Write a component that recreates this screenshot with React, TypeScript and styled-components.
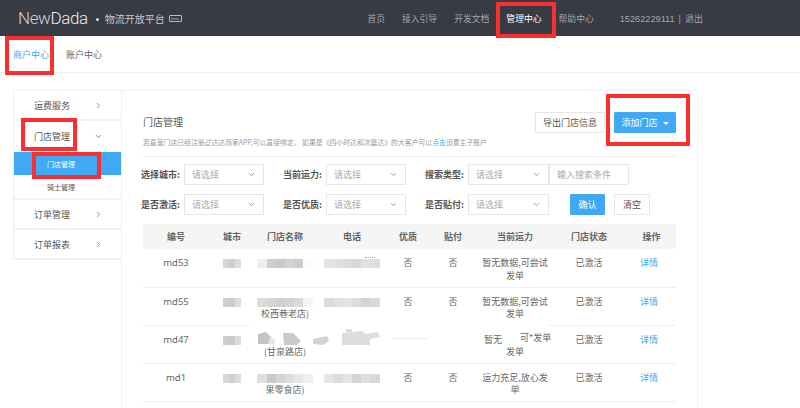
import React from 'react';
import styled, { createGlobalStyle } from 'styled-components';
import { ChevronDown, ChevronRight } from 'lucide-react';

const FONT = '"Noto Sans CJK SC", "Noto Sans", sans-serif';
const BLUE = '#3fa9f5';

const Global = createGlobalStyle`
html, body { margin: 0; padding: 0; background: #fff; }
body { font-family: ${FONT}; color: #666; font-size: 9px; }
* { box-sizing: border-box; }
`;

interface Row {
  id: string;
  city: string[];
  name: string[];
  nameNote: string;
  phone: string[];
  phoneSpeck?: boolean;
  quality: string;
  paid: string;
  capacity: string;
  garbled?: boolean;
}

const rows: Row[] = [
  {
    id: 'md53',
    city: ['#d6d6d6', '#cfcfcf', '#dedede'],
    name: ['#eeeeee', '#cdcdcd', '#c9c9c9', '#d2d2d2', '#cccccc', '#fbfbfb'],
    nameNote: '',
    phone: ['#e4e4e4', '#e0e0e0', '#dcdcdc', '#d8d8d8', '#e2e2e2', '#dedede'],
    phoneSpeck: true,
    quality: '否',
    paid: '否',
    capacity: '暂无数据,可尝试发单',
  },
  {
    id: 'md55',
    city: ['#cfcfcf', '#cccccc', '#dddddd'],
    name: ['#dcdcdc', '#d6d6d6', '#d0d0d0', '#d4d4d4', '#dadada', '#f2f7f6'],
    nameNote: '校西巷老店)',
    phone: ['#dfdbdb', '#e2e0e0', '#e4e2e2', '#dedcdc', '#d4d4d4', '#dadada'],
    quality: '否',
    paid: '否',
    capacity: '暂无数据,可尝试发单',
  },
  {
    id: 'md47',
    city: ['#cdcdcd', '#cbcbcb', '#dadada'],
    name: [],
    nameNote: '(甘泉路店)',
    phone: [],
    quality: '',
    paid: '',
    capacity: '',
    garbled: true,
  },
  {
    id: 'md1',
    city: ['#d8d8d8', '#d0d0d0', '#dcdcdc'],
    name: ['#dedede', '#c9c9c9', '#d4d4d4', '#dddddd', '#e8e8e8', '#efefef'],
    nameNote: '果零食店)',
    phone: ['#e6e6e6', '#dcdcdc', '#e4e4e4', '#d4d4d4', '#dedede', '#d8d8d8'],
    quality: '否',
    paid: '否',
    capacity: '运力充足,放心发单',
  },
];

const columns = [
  { title: '编号', width: 66 },
  { title: '城市', width: 46 },
  { title: '门店名称', width: 60 },
  { title: '电话', width: 74 },
  { title: '优质', width: 38 },
  { title: '贴付', width: 52 },
  { title: '当前运力', width: 72 },
  { title: '门店状态', width: 76 },
  { title: '操作', width: 49 },
];

const marks = [
  { x: 496, y: 2, w: 60, h: 36 },
  { x: 5, y: 36, w: 49, h: 39 },
  { x: 21, y: 118, w: 56, h: 33 },
  { x: 32, y: 152, w: 69, h: 27 },
  { x: 606, y: 94, w: 84, h: 52 },
];

const Filter = ({ label, width }: { label: string; width?: number }) => (
  <Field>
    <FieldLabel>{label}</FieldLabel>
    <Select $w={width || 80}>
      请选择
      <ChevronDown size={9} strokeWidth={2} color="#777" />
    </Select>
  </Field>
);

const Mosaic = ({ cells, cellWidth, speck }: { cells: string[]; cellWidth: number; speck?: boolean }) => (
  <Pixels>
    {cells.map((c, i) => (
      <Pixel key={i} $c={c} $w={cellWidth} />
    ))}
    {speck && <Speck />}
  </Pixels>
);

export default function App() {
  return (
    <Page>
      <Global />
      <Header>
        <Logo>
          New<strong>Dada</strong>
        </Logo>
        <Dot />
        <Platform>物流开放平台</Platform>
        <Beta>beta</Beta>
        <Nav>
          <NavLink>首页</NavLink>
          <NavLink>接入引导</NavLink>
          <NavLink>开发文档</NavLink>
          <NavLink $active>管理中心</NavLink>
          <NavLink>帮助中心</NavLink>
        </Nav>
        <User>
          15262229111<UserSep>|</UserSep>
          <Logout>退出</Logout>
        </User>
      </Header>

      <SubNav>
        <SubLink $active>商户中心</SubLink>
        <SubLink>账户中心</SubLink>
      </SubNav>

      <Body>
        <Side>
          <SideItem>
            运费服务
            <ChevronRight size={9} strokeWidth={2} color="#666" />
          </SideItem>
          <SideGroup>
            <SideItem as="div" $plain>
              门店管理
              <ChevronDown size={9} strokeWidth={2} color="#666" />
            </SideItem>
            <SubItem $active>门店管理</SubItem>
            <SubItem>骑士管理</SubItem>
          </SideGroup>
          <SideItem>
            订单管理
            <ChevronRight size={9} strokeWidth={2} color="#666" />
          </SideItem>
          <SideItem>
            订单报表
            <ChevronRight size={9} strokeWidth={2} color="#666" />
          </SideItem>
        </Side>

        <Panel>
          <PanelHead>
            <div>
              <Title>门店管理</Title>
              <Desc>
                若直营门店已经注册过达达商家APP,可以直接绑定。 如果是《四小时达和次晨达》的大客户可以<a>点击</a>设置主子账户
              </Desc>
            </div>
            <HeadActions>
              <Btn $w={70}>导出门店信息</Btn>
              <Btn $w={62} $primary>
                添加门店 <Caret />
              </Btn>
            </HeadActions>
          </PanelHead>

          <FilterRow>
            <Filter label="选择城市:" />
            <Filter label="当前运力:" />
            <Filter label="搜索类型:" width={81} />
            <SearchBox>输入搜索条件</SearchBox>
          </FilterRow>
          <FilterRow>
            <Filter label="是否激活:" />
            <Filter label="是否优质:" />
            <Filter label="是否贴付:" width={81} />
            <FilterBtns>
              <Btn $w={35} $primary>
                确认
              </Btn>
              <Btn $w={36}>清空</Btn>
            </FilterBtns>
          </FilterRow>

          <Table>
            <colgroup>
              {columns.map((c) => (
                <col key={c.title} width={c.width} />
              ))}
            </colgroup>
            <thead>
              <tr>
                {columns.map((c) => (
                  <Th key={c.title}>{c.title}</Th>
                ))}
              </tr>
            </thead>
            <tbody>
              {rows.map((r) => (
                <tr key={r.id}>
                  <IdCell>{r.id}</IdCell>
                  <Td>
                    <Mosaic cells={r.city} cellWidth={6} />
                  </Td>
                  <Td>
                    {r.name.length > 0 ? <Mosaic cells={r.name} cellWidth={9.2} /> : <Blank />}
                    {r.nameNote}
                  </Td>
                  <Td>
                    {r.phone.length > 0 ? <Mosaic cells={r.phone} cellWidth={9.2} speck={r.phoneSpeck} /> : <Blank />}
                  </Td>
                  <Td>{r.quality}</Td>
                  <Td>{r.paid}</Td>
                  {r.garbled ? (
                    <Td>
                      <Garbled>
                        暂无
                        <Stray>可*发单</Stray>
                      </Garbled>
                      发单
                    </Td>
                  ) : (
                    <Td>{r.capacity}</Td>
                  )}
                  <Td>已激活</Td>
                  <LinkCell>详情</LinkCell>
                </tr>
              ))}
            </tbody>
          </Table>
        </Panel>
      </Body>

      {/* 第三行被涂抹的部分 */}
      <Smudge viewBox="0 0 300 30" width="300" height="30">
        <rect x="0" y="0" width="299" height="8" fill="#fff" />
        <path d="M8 13l8-2 6 6-4 6H8z" fill="#c4c4c4" />
        <path d="M20 16l6 3-2 5-6-1z" fill="#e6e6e6" />
        <path d="M33 12l10 0 8 8-4 4H34z" fill="#c9cacb" />
        <path d="M63 18l14-3 2 5-6 4-10-1z" fill="#d2d2d2" />
        <path d="M92 12l20-2 4 3 12-2 2 5-10 2v6H92z" fill="#dddddd" />
        <path d="M96 8h6v3h-6z" fill="#e8d8d8" />
        <rect x="142" y="17" width="36" height="1" fill="#ececec" />
      </Smudge>

      {marks.map((m) => (
        <Mark key={`${m.x}-${m.y}`} $x={m.x} $y={m.y} $w={m.w} $h={m.h} />
      ))}
    </Page>
  );
}

const Page = styled.div`
  position: relative;
  width: 800px;
  height: 408px;
  overflow: hidden;
`;
const Header = styled.header`
  height: 36px;
  background: #383a44;
  display: flex;
  align-items: center;
  padding: 0 97px 0 18px;
  color: #b9bac0;
`;
const Logo = styled.div`
  font-family: Roboto, sans-serif;
  font-weight: 300;
  font-size: 17px;
  letter-spacing: -0.4px;
  color: #d5d6da;
  strong {
    font-weight: 300;
    color: #eceded;
  }
`;
const Dot = styled.span`
  width: 3px;
  height: 3px;
  border-radius: 50%;
  background: #ddd;
  margin: 2px 6px 0 8px;
`;
const Platform = styled.span`
  font-size: 10px;
  color: #c8c9cd;
`;
const Beta = styled.span`
  margin-left: 4px;
  width: 13px;
  height: 7px;
  border: 1px solid #b9bac0;
  border-radius: 1px;
  font-family: 'Liberation Sans', sans-serif;
  font-size: 4px;
  line-height: 5px;
  text-align: center;
`;
const Nav = styled.nav`
  margin-left: auto;
  display: flex;
  gap: 17px;
`;
const NavLink = styled.a<{ $active?: boolean }>`
  font-size: 8.8px;
  color: ${(p) => (p.$active ? '#fff' : '#a5a6ac')};
`;
const User = styled.div`
  margin-left: 26px;
  font-family: 'Liberation Sans', sans-serif;
  font-size: 9.2px;
  color: #a5a6ac;
`;
const UserSep = styled.span`
  margin: 0 4px;
`;
const Logout = styled.span`
  font-family: ${FONT};
  font-size: 9px;
`;
const SubNav = styled.div`
  height: 37px;
  display: flex;
  align-items: center;
  gap: 17px;
  padding-left: 13px;
  border-bottom: 1px solid #eee;
`;
const SubLink = styled.a<{ $active?: boolean }>`
  font-size: 9px;
  color: ${(p) => (p.$active ? BLUE : '#666')};
`;
const Body = styled.div`
  display: flex;
  padding: 17px 0 0 13px;
  align-items: flex-start;
`;
const Side = styled.aside`
  width: 108px;
  border-top: 1px solid #f0f0f0;
  border-left: 1px solid #f0f0f0;
`;
const SideItem = styled.div<{ $plain?: boolean }>`
  height: ${(p) => (p.$plain ? '31px' : '30px')};
  display: flex;
  align-items: center;
  justify-content: space-between;
  padding: 0 18px 0 20px;
  font-size: 9px;
  color: #555;
  border-bottom: ${(p) => (p.$plain ? 'none' : '2px solid #f3f3f3')};
`;
const SideGroup = styled.div`
  border-bottom: 2px solid #f3f3f3;
`;
const SubItem = styled.div<{ $active?: boolean }>`
  height: 23px;
  display: flex;
  align-items: center;
  padding-left: 33px;
  font-size: 7px;
  color: ${(p) => (p.$active ? '#fff' : '#555')};
  background: ${(p) => (p.$active ? BLUE : 'transparent')};
`;
const Panel = styled.main`
  width: 577px;
  height: 330px;
  padding: 21px 21px 0 21px;
  border: 1px solid #f0f0f0;
  border-bottom: none;
`;
const PanelHead = styled.div`
  height: 45px;
  display: flex;
  justify-content: space-between;
  align-items: flex-start;
  border-bottom: 1px solid #eee;
`;
const Title = styled.div`
  font-size: 10px;
  line-height: 14px;
  margin-top: 3px;
  color: #555;
`;
const Desc = styled.div`
  font-size: 6.85px;
  line-height: 12px;
  margin-top: 7px;
  white-space: nowrap;
  color: #999;
  a {
    color: ${BLUE};
  }
`;
const HeadActions = styled.div`
  display: flex;
  gap: 9px;
`;
const Btn = styled.button<{ $w: number; $primary?: boolean }>`
  width: ${(p) => p.$w}px;
  height: 21px;
  padding: 0;
  font-family: ${FONT};
  font-size: 9px;
  border-radius: 1px;
  border: 1px solid ${(p) => (p.$primary ? BLUE : '#e6e6e6')};
  background: ${(p) => (p.$primary ? BLUE : '#fff')};
  color: ${(p) => (p.$primary ? '#fff' : '#555')};
`;
const Caret = styled.i`
  display: inline-block;
  margin-left: 3px;
  vertical-align: 1px;
  border: 3px solid transparent;
  border-top-color: #fff;
  border-bottom: none;
`;
const FilterRow = styled.div`
  display: flex;
  gap: 19px;
  margin: 7px 0 0 -2px;
  & + & {
    margin-top: 9px;
  }
`;
const Field = styled.div`
  display: flex;
  align-items: center;
`;
const FieldLabel = styled.label`
  width: 43px;
  font-size: 9px;
  font-weight: 700;
  color: #555;
  white-space: nowrap;
`;
const Select = styled.div<{ $w: number }>`
  width: ${(p) => p.$w}px;
  height: 21px;
  padding: 0 7px;
  display: flex;
  align-items: center;
  justify-content: space-between;
  border: 1px solid #e6e6e6;
  font-size: 9px;
  color: #aaa;
`;
const SearchBox = styled.div`
  width: 80px;
  height: 21px;
  margin-left: -19px;
  padding-left: 7px;
  display: flex;
  align-items: center;
  border: 1px solid #e6e6e6;
  font-size: 9px;
  color: #aaa;
`;
const FilterBtns = styled.div`
  display: flex;
  gap: 9px;
  margin-left: 2px;
`;
const Table = styled.table`
  width: 533px;
  margin-top: 9px;
  border-collapse: collapse;
  table-layout: fixed;
`;
const Th = styled.th`
  height: 25px;
  padding: 0;
  background: #f5f5f5;
  font-size: 9px;
  font-weight: 700;
  color: #666;
`;
const Td = styled.td`
  height: 38px;
  padding: 8px 2px 0;
  vertical-align: top;
  text-align: center;
  font-size: 9px;
  line-height: 12.5px;
  color: #666;
  border-bottom: 1px solid #eee;
`;
const IdCell = styled(Td)`
  font-family: 'Noto Sans', sans-serif;
  font-size: 9.5px;
`;
const LinkCell = styled(Td)`
  color: ${BLUE};
  padding-right: 7px;
`;
const Pixels = styled.div`
  position: relative;
  display: flex;
  height: 9px;
  margin: 2px 0 1.5px;
  justify-content: center;
`;
const Pixel = styled.span<{ $c: string; $w: number }>`
  width: ${(p) => p.$w}px;
  background: ${(p) => p.$c};
`;
const Speck = styled.span`
  position: absolute;
  right: 12px;
  top: -2px;
  width: 10px;
  height: 2px;
  border-top: 1px dotted #aaa;
`;
const Blank = styled.div`
  height: 12.5px;
`;
const Garbled = styled.div`
  display: flex;
  height: 12.5px;
  padding-left: 3px;
  white-space: nowrap;
`;
const Stray = styled.span`
  margin: -2px 0 0 18px;
`;
const Smudge = styled.svg`
  position: absolute;
  left: 250px;
  top: 321px;
`;
const Mark = styled.div<{ $x: number; $y: number; $w: number; $h: number }>`
  position: absolute;
  left: ${(p) => p.$x}px;
  top: ${(p) => p.$y}px;
  width: ${(p) => p.$w}px;
  height: ${(p) => p.$h}px;
  border: 4px solid #f9302f;
`;
